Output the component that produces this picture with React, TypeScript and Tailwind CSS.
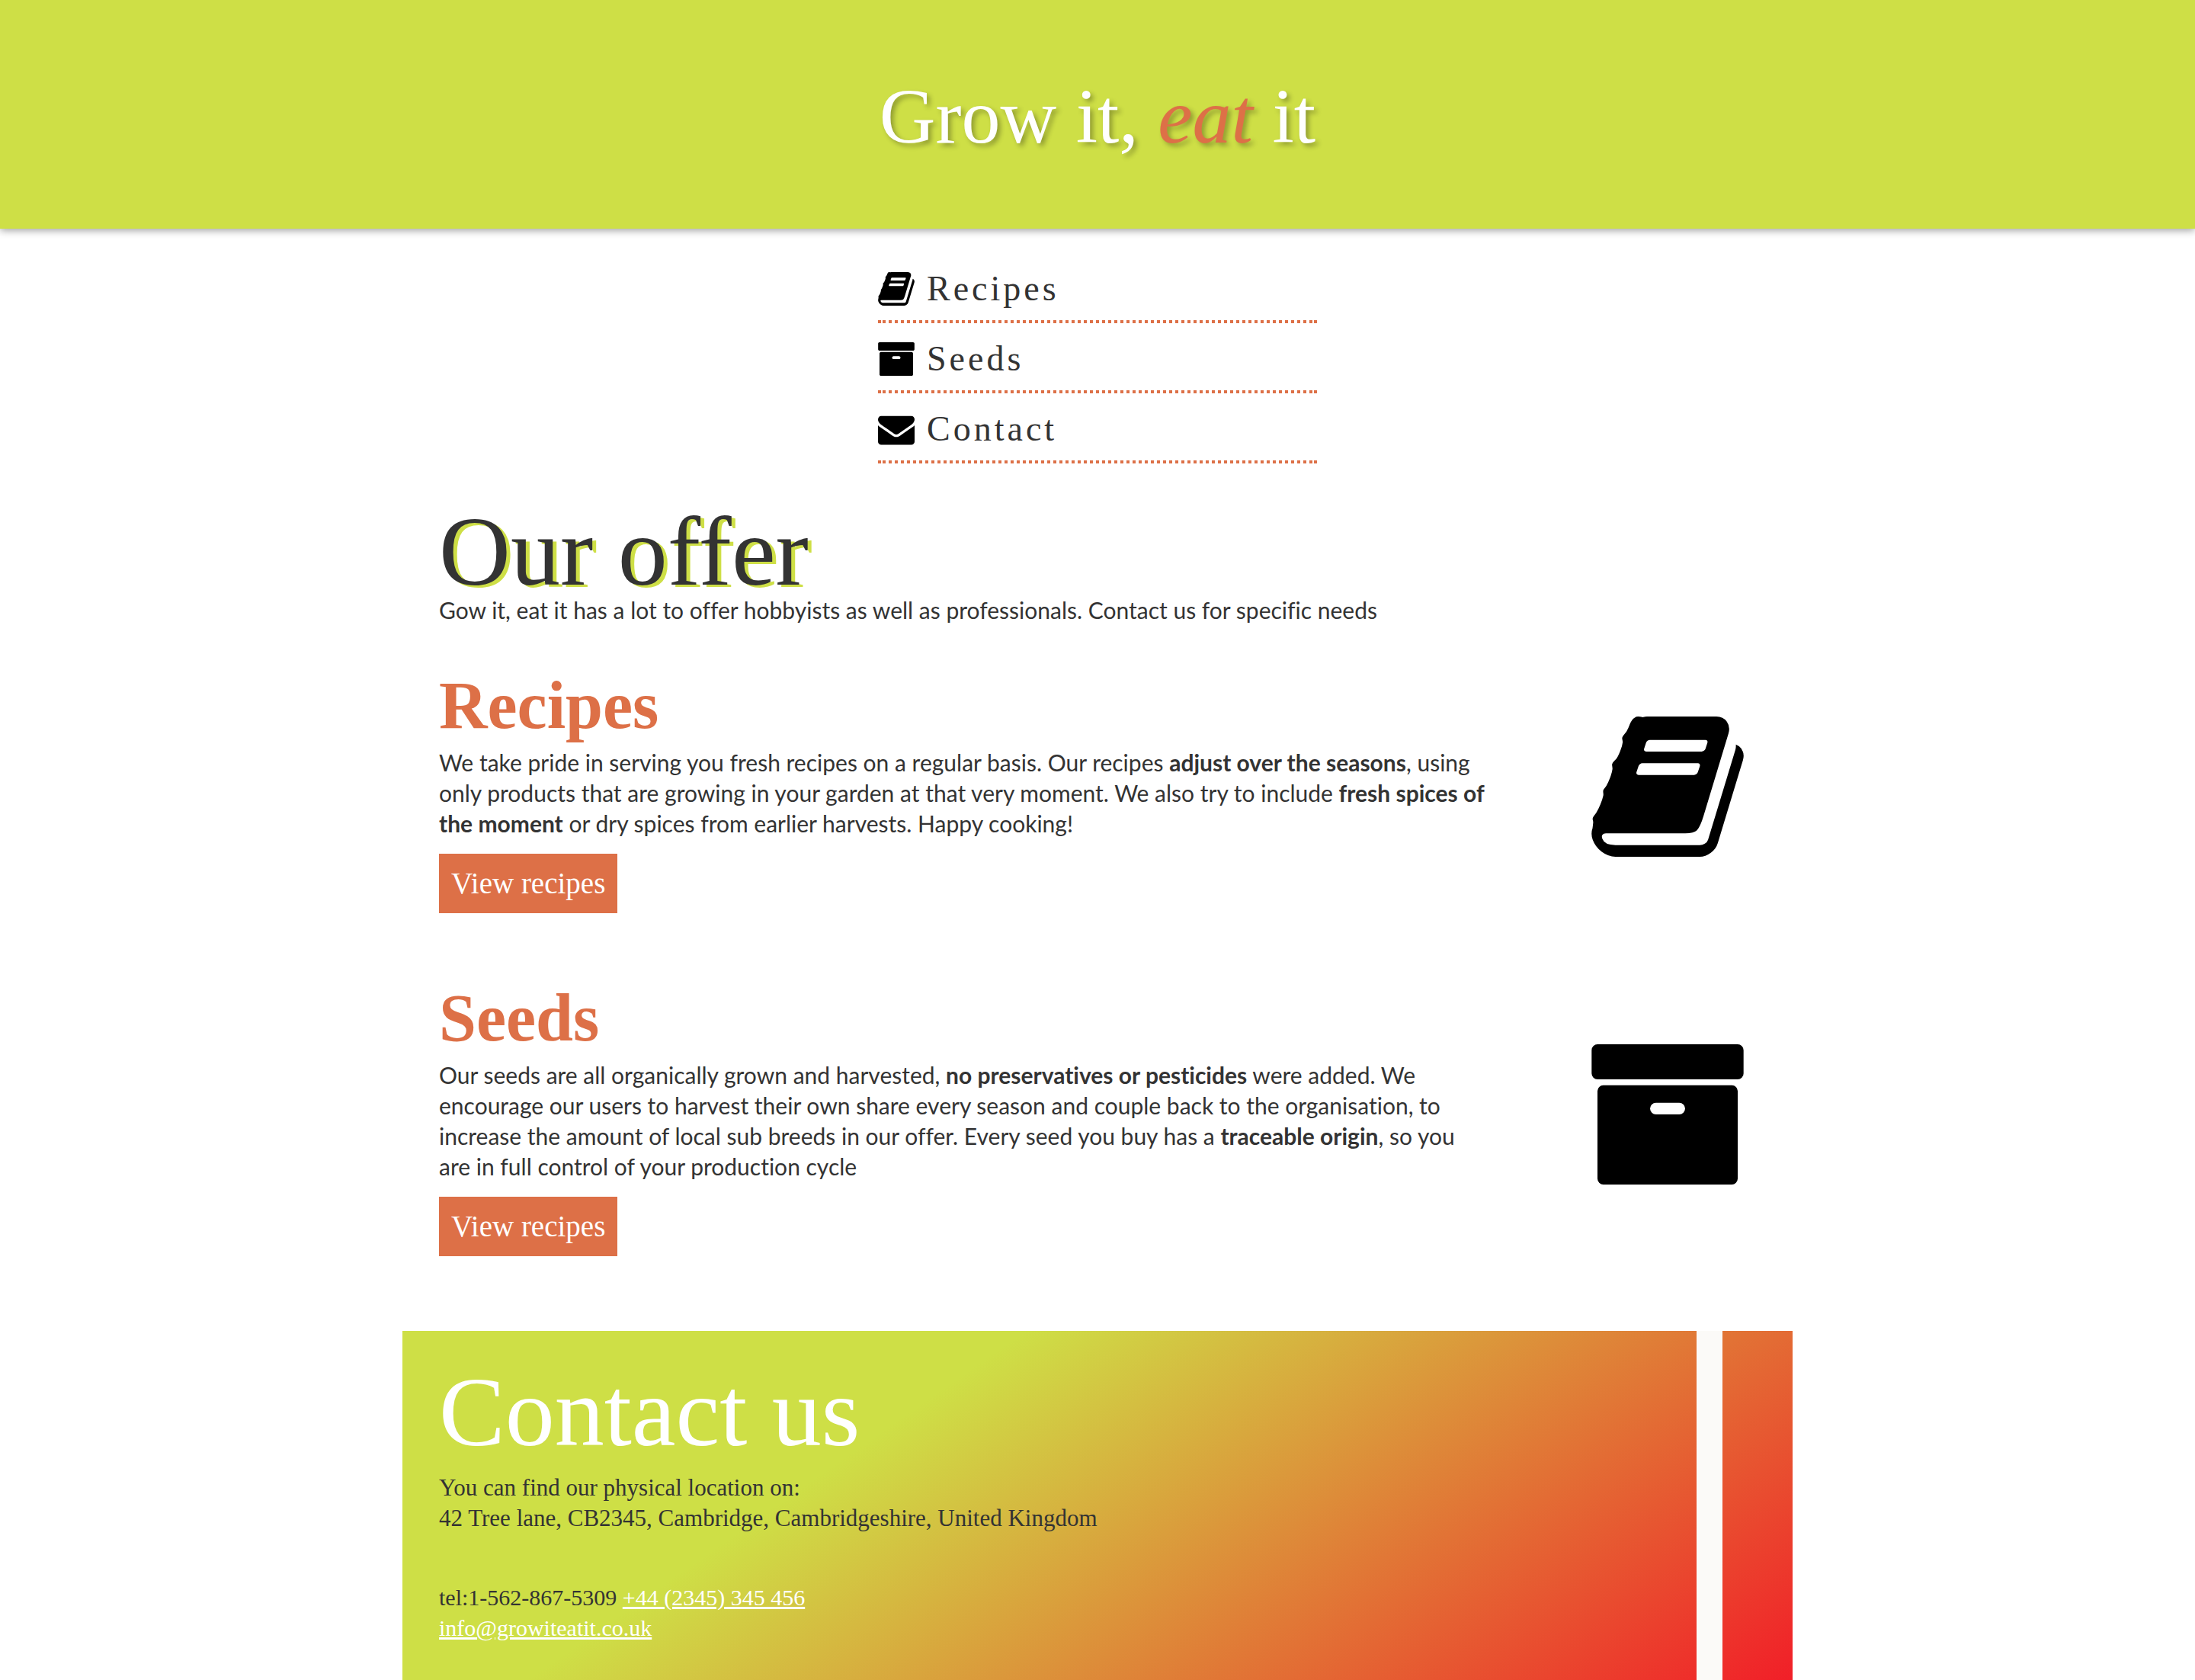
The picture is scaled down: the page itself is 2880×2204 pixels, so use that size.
import React from "react";

const SERIF = "font-['Liberation_Serif',serif]";

type IconProps = { className?: string };

function BookIcon({ className }: IconProps) {
  return (
    <svg viewBox="64 128 1664 1536" className={className} fill="currentColor" aria-hidden="true">
      <path d="M1703 478q40 57 18 129l-275 906q-19 64-76.500 107.500t-122.500 43.500h-923q-77 0-148.500-53.500t-99.500-131.500q-24-67-2-127 0-4 3-27t4-37q1-8-3-21.500t-3-19.500q2-11 8-21t16.500-23.500 16.500-23.500q23-38 45-91.500t30-91.500q3-10 .5-30t-.5-28q3-11 17-28t17-23q21-36 42-92t25-90q1-9-2.500-32t.5-28q4-13 22-30.500t22-22.500q19-26 42.500-84.500t27.500-96.500q1-8-3-25.500t-2-26.500q2-8 9-18t18-23 17-21q8-12 16.500-30.500t15-35 16-36 19.500-32 26.500-23.500 36-11.500 47.500 5.500l-1 3q38-9 51-9h761q74 0 114 56t18 130l-274 906q-36 119-71.500 153.500t-128.500 34.500h-869q-27 0-38 15-11 16-1 43 24 70 144 70h923q29 0 56-15.500t35-41.500l300-987q7-22 5-57 38 15 59 43zm-1064 2q-4 13 2 22.500t20 9.500h608q13 0 25.500-9.500t16.500-22.500l21-64q4-13-2-22.500t-20-9.500h-608q-13 0-25.500 9.500t-16.500 22.500zm-83 256q-4 13 2 22.500t20 9.500h608q13 0 25.500-9.500t16.500-22.500l21-64q4-13-2-22.500t-20-9.500h-608q-13 0-25.500 9.500t-16.500 22.500z" />
    </svg>
  );
}

function ArchiveIcon({ className }: IconProps) {
  return (
    <svg viewBox="64 128 1664 1536" className={className} fill="currentColor" aria-hidden="true">
      <path d="M1088 832q0-26-19-45t-45-19h-256q-26 0-45 19t-19 45 19 45 45 19h256q26 0 45-19t19-45zm576-192v960q0 26-19 45t-45 19h-1408q-26 0-45-19t-19-45v-960q0-26 19-45t45-19h1408q26 0 45 19t19 45zm64-448v256q0 26-19 45t-45 19h-1536q-26 0-45-19t-19-45v-256q0-26 19-45t45-19h1536q26 0 45 19t19 45z" />
    </svg>
  );
}

function EnvelopeIcon({ className }: IconProps) {
  return (
    <svg viewBox="0 128 1792 1536" className={className} fill="currentColor" aria-hidden="true">
      <path d="M1792 710v794q0 66-47 113t-113 47h-1472q-66 0-113-47t-47-113v-794q44 49 101 87 362 246 497 345 57 42 92.500 65.500t94.500 48 110 24.500h2q51 0 110-24.500t94.500-48 92.500-65.500q170-123 498-345 57-39 100-87zm0-294q0 79-49 151t-122 123q-376 261-468 325-10 7-42.500 31t-54 38.500-52 32.500-57.500 27-50 9h-2q-23 0-50-9t-57.500-27-52-32.500-54-38.500-42.500-31q-91-64-262-182.500t-205-142.500q-62-42-117-115.500t-55-136.500q0-78 41.500-130t118.500-52h1472q65 0 112.500 47t47.500 113z" />
    </svg>
  );
}

type NavItemProps = { href: string; icon: React.ReactNode; label: string };

function NavItem({ href, icon, label }: NavItemProps) {
  return (
    <li>
      <a href={href} className="flex h-22 items-center gap-4 pt-1.5 text-black">
        {icon}
        <span className={`${SERIF} text-[46px] leading-none tracking-[4px] text-[#333]`}>{label}</span>
      </a>
      <div className="h-1 border-x-4 border-[#dd7047] bg-[repeating-linear-gradient(90deg,transparent_0_2px,#dd7047_2px_6px,transparent_6px_8px)]" />
    </li>
  );
}

type OfferProps = { id: string; title: string; icon: React.ReactNode; children: React.ReactNode };

function Offer({ id, title, icon, children }: OfferProps) {
  return (
    <section id={id} className="flex items-center justify-between gap-8 pr-4 text-black">
      <div className="max-w-[1376px]">
        <h2 className={`${SERIF} text-[88px] leading-[108px] font-bold text-[#dd7047]`}>{title}</h2>
        <p className="text-[30px] leading-10 text-[#333]">{children}</p>
        <a
          href={`#${id}`}
          className={`${SERIF} mt-5 block w-fit bg-[#dd7047] px-4 text-[39px] leading-[78px] text-white`}
        >
          View recipes
        </a>
      </div>
      {icon}
    </section>
  );
}

export default function App() {
  return (
    <div className="bg-white font-['Lato',sans-serif] text-[#333] [font-variant-ligatures:no-common-ligatures]">
      <header className="flex h-[300px] items-center justify-center bg-[#cedf46] pt-1.5 shadow-[0_2px_10px_rgba(0,0,0,0.4)]">
        <h1 className={`${SERIF} text-[102px] leading-[120px] text-white [text-shadow:4px_4px_6px_rgba(0,0,0,0.3)]`}>
          Grow it, <em className="text-[#dd7047]">eat</em> it
        </h1>
      </header>

      <nav className="mx-auto mt-8 w-1/5">
        <ul>
          <NavItem href="#recipes" icon={<BookIcon className="h-11 w-12" />} label="Recipes" />
          <NavItem href="#seeds" icon={<ArchiveIcon className="h-11 w-12" />} label="Seeds" />
          <NavItem href="#contact" icon={<EnvelopeIcon className="h-11 w-12" />} label="Contact" />
        </ul>
      </nav>

      <main className="mx-auto mt-[58px] max-w-[1824px] px-12">
        <h1 className={`${SERIF} text-[130px] leading-[114px] [text-shadow:5px_3px_0_#cedf46]`}>Our offer</h1>
        <p className="text-[30px] leading-10">
          Gow it, eat it has a lot to offer hobbyists as well as professionals. Contact us for specific needs
        </p>
        <div className="mt-13 flex flex-col gap-21">
          <Offer id="recipes" title="Recipes" icon={<BookIcon className="mb-1.5 h-[184px] w-[200px] shrink-0" />}>
            We take pride in serving you fresh recipes on a regular basis. Our recipes{" "}
            <strong>adjust over the seasons</strong>, using only products that are growing in your garden at that very
            moment. We also try to include <strong>fresh spices of the moment</strong> or dry spices from earlier
            harvests. Happy cooking!
          </Offer>
          <Offer id="seeds" title="Seeds" icon={<ArchiveIcon className="mb-1.5 h-[184px] w-[200px] shrink-0" />}>
            Our seeds are all organically grown and harvested, <strong>no preservatives or pesticides</strong> were
            added. We encourage our users to harvest their own share every season and couple back to the organisation,
            to increase the amount of local sub breeds in our offer. Every seed you buy has a{" "}
            <strong>traceable origin</strong>, so you are in full control of your production cycle
          </Offer>
        </div>
      </main>

      <footer
        id="contact"
        className={`${SERIF} relative mx-auto mt-[98px] max-w-[1824px] bg-[linear-gradient(145deg,#cedf46_33%,#f11f28_100%)] px-12 pt-[42px] pb-12 leading-10`}
      >
        <div className="absolute inset-y-0 right-[92px] w-[34px] bg-[#fbfaf8]" />
        <h2 className="text-[130px] leading-[128px] text-white">Contact us</h2>
        <p className="mt-4 text-[31px]">
          You can find our physical location on:
          <br />
          42 Tree lane, CB2345, Cambridge, Cambridgeshire, United Kingdom
        </p>
        <p className="mt-16 text-[30px]">
          tel:1-562-867-5309{" "}
          <a href="tel:+442345345456" className="text-white underline">
            +44 (2345) 345 456
          </a>
          <br />
          <a href="mailto:info@growiteatit.co.uk" className="text-white underline">
            info@growiteatit.co.uk
          </a>
        </p>
      </footer>
    </div>
  );
}
